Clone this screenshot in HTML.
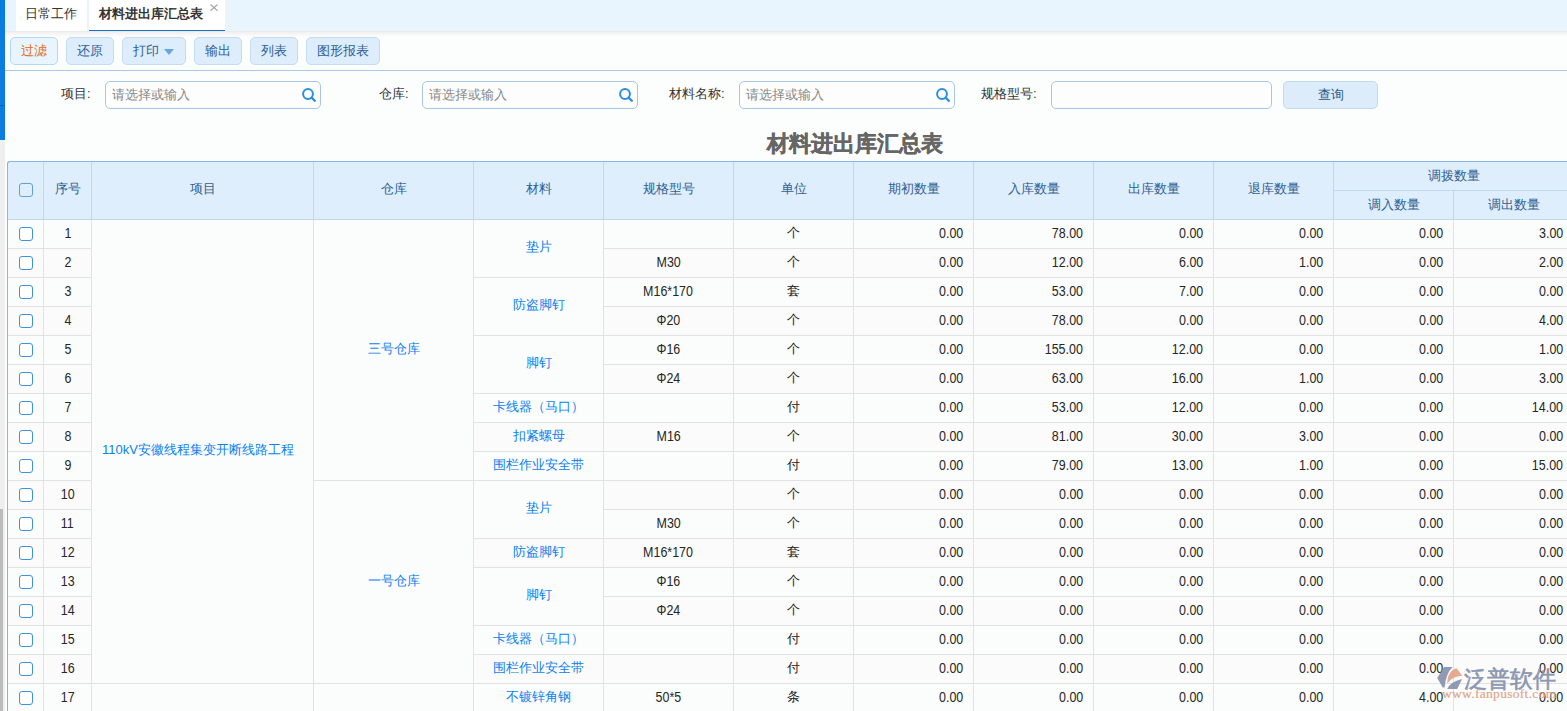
<!DOCTYPE html>
<html><head><meta charset="utf-8">
<style>
*{box-sizing:border-box;margin:0;padding:0}
html,body{width:1567px;height:711px;overflow:hidden;background:#fcfdfd;font-family:"Liberation Sans",sans-serif;font-size:13px;color:#333}
.abs{position:absolute}
#lstrip{position:absolute;left:0;top:140px;width:5px;height:571px;background:#efefef}
#lblue{position:absolute;left:0;top:0;width:5px;height:140px;background:#0a7de0}
#lblue i{position:absolute;left:0;top:105px;width:5px;height:1px;background:#0864b4}
#thumb{position:absolute;left:0;top:509px;width:3px;height:202px;background:#bcbcbc}
#tabbar{position:absolute;left:5px;top:0;width:1562px;height:31px;background:#e8f4fe}
.tab{position:absolute;top:0;height:31px;background:#fff;color:#333;font-size:13px;line-height:28px;white-space:nowrap}
#tb{position:absolute;left:5px;top:31px;width:1562px;height:40px;background:#fcfdfd;border-bottom:1px solid #a9c9e6}
.btn{position:absolute;top:37px;height:28px;border:1px solid #c4dcf1;background:#deedfb;border-radius:5px;color:#2b609a;font-size:13px;text-align:center;line-height:26px}
.lbl{position:absolute;top:85px;line-height:18px;color:#333;font-size:13px;white-space:nowrap}
.inp{position:absolute;top:81px;height:28px;border:1px solid #a8c7e5;border-radius:5px;background:#fdfdfd;color:#888;font-size:13px;line-height:26px;padding-left:6px}
.srch{position:absolute;right:4px;top:6px;width:14px;height:14px}
#title{position:absolute;left:767px;top:130px;font-size:22px;font-weight:bold;color:#666;-webkit-text-stroke:0.4px #666;line-height:28px;white-space:nowrap}
#tbl{position:absolute;left:7px;top:161px;width:1570px;height:560px;border-left:1px solid #84b6e6;border-top:1px solid #84b6e6;border-top-left-radius:4px;overflow:hidden}
.h{position:absolute;background:#dfeefc;border-right:1px solid #c1d8eb;border-bottom:1px solid #c1d8eb;color:#2f6194;font-size:13px;padding-bottom:4px;display:flex;align-items:center;justify-content:center;white-space:nowrap}
.rowbg{position:absolute;left:7px;width:1567px;height:29px}
.c{position:absolute;border-right:1px solid #e2e2e2;border-bottom:1px solid #e2e2e2;font-size:13px;color:#222;display:flex;align-items:center;white-space:nowrap;padding-bottom:2px}
.ctr{justify-content:center}
.dg span{display:inline-block;font-size:14px;transform:scaleX(.89);color:#262626}
.num span{transform-origin:100% 50%}
.cb{justify-content:center}
.num{justify-content:flex-end;padding-right:10px}
.lft{padding-left:10px}
.lnk{color:#0d7ff0}
.mrg{background:#fbfdfd;padding-bottom:3px}
.chk{display:inline-block;width:14px;height:14px;border:1px solid #3d93dd;border-radius:3px;background:#fff}
.cb .chk{margin-top:4px}
.h .chk{background:transparent;border-color:#62a0d6}
#tbody{position:absolute;left:0;top:0}
#logo{position:absolute;left:1437px;top:664px;width:125px;height:40px}
</style></head><body>
<div id="lblue"><i></i></div>
<div id="lstrip"></div>
<div id="thumb"></div>
<div id="tabbar">
 <div class="tab" style="left:11px;width:71px;padding-left:9px">日常工作</div>
 <div class="tab" style="left:84px;width:136px;padding-left:10px;font-weight:bold;border-bottom:1px solid #1570c8">材料进出库汇总表<svg style="position:absolute;left:120px;top:3px" width="10" height="10" viewBox="0 0 10 10"><path d="M1.5,1.5 L8.5,7.8 M8.5,1.5 L1.5,7.8" stroke="#a8a8a8" stroke-width="1.2"/></svg></div>
</div>
<div id="tb"></div>
<div style="position:absolute;left:5px;top:31px;width:1562px;height:1px;background:#ebebe9"></div><div style="position:absolute;left:5px;top:32px;width:1562px;height:1px;background:#f1f1f0"></div><div style="position:absolute;left:5px;top:33px;width:1562px;height:1px;background:#f4f4f4"></div><div style="position:absolute;left:5px;top:34px;width:1562px;height:1px;background:#f7f7f7"></div><div style="position:absolute;left:5px;top:35px;width:1562px;height:1px;background:#f9faf9"></div><div style="position:absolute;left:5px;top:36px;width:1562px;height:1px;background:#fbfcfb"></div>
<div class="btn" style="left:10px;width:48px;color:#e16c14;border-color:#b0d8f8;background:#e8f4fe">过滤</div>
<div class="btn" style="left:66px;width:48px">还原</div>
<div class="btn" style="left:122px;width:64px;text-align:left;padding-left:10px">打印<span style="position:absolute;left:41px;top:11px;width:0;height:0;border-left:5px solid transparent;border-right:5px solid transparent;border-top:6px solid #68a6de"></span></div>
<div class="btn" style="left:194px;width:48px">输出</div>
<div class="btn" style="left:250px;width:48px">列表</div>
<div class="btn" style="left:306px;width:74px">图形报表</div>

<div class="lbl" style="left:61px">项目:</div>
<div class="inp" style="left:105px;width:216px">请选择或输入<svg class="srch" viewBox="0 0 14 14"><circle cx="6" cy="6" r="4.9" fill="none" stroke="#2a8fe0" stroke-width="2"/><path d="M9.6 9.6 L12.8 12.8" stroke="#2a8fe0" stroke-width="2.3" stroke-linecap="round"/></svg></div>
<div class="lbl" style="left:379px">仓库:</div>
<div class="inp" style="left:422px;width:216px">请选择或输入<svg class="srch" viewBox="0 0 14 14"><circle cx="6" cy="6" r="4.9" fill="none" stroke="#2a8fe0" stroke-width="2"/><path d="M9.6 9.6 L12.8 12.8" stroke="#2a8fe0" stroke-width="2.3" stroke-linecap="round"/></svg></div>
<div class="lbl" style="left:669px">材料名称:</div>
<div class="inp" style="left:739px;width:216px">请选择或输入<svg class="srch" viewBox="0 0 14 14"><circle cx="6" cy="6" r="4.9" fill="none" stroke="#2a8fe0" stroke-width="2"/><path d="M9.6 9.6 L12.8 12.8" stroke="#2a8fe0" stroke-width="2.3" stroke-linecap="round"/></svg></div>
<div class="lbl" style="left:981px">规格型号:</div>
<div class="inp" style="left:1051px;width:221px"></div>
<div class="btn" style="left:1283px;top:81px;width:95px;height:28px;color:#2b5a87;background:#dcecfb;border-color:#c2daf0">查询</div>

<div id="title">材料进出库汇总表</div>

<div id="tbl"></div>
<div id="cells" style="position:absolute;left:0;top:0;width:1567px;height:711px;overflow:hidden">
<div class="rowbg" style="top:219px;background:#fbfdfd"></div>
<div class="rowbg" style="top:248px;background:#fcfbfb"></div>
<div class="rowbg" style="top:277px;background:#fbfdfd"></div>
<div class="rowbg" style="top:306px;background:#fcfbfb"></div>
<div class="rowbg" style="top:335px;background:#fbfdfd"></div>
<div class="rowbg" style="top:364px;background:#fcfbfb"></div>
<div class="rowbg" style="top:393px;background:#fbfdfd"></div>
<div class="rowbg" style="top:422px;background:#fcfbfb"></div>
<div class="rowbg" style="top:451px;background:#fbfdfd"></div>
<div class="rowbg" style="top:480px;background:#fcfbfb"></div>
<div class="rowbg" style="top:509px;background:#fbfdfd"></div>
<div class="rowbg" style="top:538px;background:#fcfbfb"></div>
<div class="rowbg" style="top:567px;background:#fbfdfd"></div>
<div class="rowbg" style="top:596px;background:#fcfbfb"></div>
<div class="rowbg" style="top:625px;background:#fbfdfd"></div>
<div class="rowbg" style="top:654px;background:#fcfbfb"></div>
<div class="rowbg" style="top:683px;background:#fbfdfd"></div>
<div class="c cb" style="left:8px;top:220px;width:36px;height:29px;"><span><i class="chk"></i></span></div>
<div class="c ctr dg" style="left:44px;top:220px;width:48px;height:29px;"><span>1</span></div>
<div class="c ctr lnk mrg" style="left:474px;top:220px;width:130px;height:58px;"><span>垫片</span></div>
<div class="c ctr dg" style="left:604px;top:220px;width:130px;height:29px;"><span></span></div>
<div class="c ctr" style="left:734px;top:220px;width:120px;height:29px;"><span>个</span></div>
<div class="c num dg" style="left:854px;top:220px;width:120px;height:29px;"><span>0.00</span></div>
<div class="c num dg" style="left:974px;top:220px;width:120px;height:29px;"><span>78.00</span></div>
<div class="c num dg" style="left:1094px;top:220px;width:120px;height:29px;"><span>0.00</span></div>
<div class="c num dg" style="left:1214px;top:220px;width:120px;height:29px;"><span>0.00</span></div>
<div class="c num dg" style="left:1334px;top:220px;width:120px;height:29px;"><span>0.00</span></div>
<div class="c num dg" style="left:1454px;top:220px;width:120px;height:29px;"><span>3.00</span></div>
<div class="c cb" style="left:8px;top:249px;width:36px;height:29px;"><span><i class="chk"></i></span></div>
<div class="c ctr dg" style="left:44px;top:249px;width:48px;height:29px;"><span>2</span></div>
<div class="c ctr dg" style="left:604px;top:249px;width:130px;height:29px;"><span>M30</span></div>
<div class="c ctr" style="left:734px;top:249px;width:120px;height:29px;"><span>个</span></div>
<div class="c num dg" style="left:854px;top:249px;width:120px;height:29px;"><span>0.00</span></div>
<div class="c num dg" style="left:974px;top:249px;width:120px;height:29px;"><span>12.00</span></div>
<div class="c num dg" style="left:1094px;top:249px;width:120px;height:29px;"><span>6.00</span></div>
<div class="c num dg" style="left:1214px;top:249px;width:120px;height:29px;"><span>1.00</span></div>
<div class="c num dg" style="left:1334px;top:249px;width:120px;height:29px;"><span>0.00</span></div>
<div class="c num dg" style="left:1454px;top:249px;width:120px;height:29px;"><span>2.00</span></div>
<div class="c cb" style="left:8px;top:278px;width:36px;height:29px;"><span><i class="chk"></i></span></div>
<div class="c ctr dg" style="left:44px;top:278px;width:48px;height:29px;"><span>3</span></div>
<div class="c ctr lnk mrg" style="left:474px;top:278px;width:130px;height:58px;"><span>防盗脚钉</span></div>
<div class="c ctr dg" style="left:604px;top:278px;width:130px;height:29px;"><span>M16*170</span></div>
<div class="c ctr" style="left:734px;top:278px;width:120px;height:29px;"><span>套</span></div>
<div class="c num dg" style="left:854px;top:278px;width:120px;height:29px;"><span>0.00</span></div>
<div class="c num dg" style="left:974px;top:278px;width:120px;height:29px;"><span>53.00</span></div>
<div class="c num dg" style="left:1094px;top:278px;width:120px;height:29px;"><span>7.00</span></div>
<div class="c num dg" style="left:1214px;top:278px;width:120px;height:29px;"><span>0.00</span></div>
<div class="c num dg" style="left:1334px;top:278px;width:120px;height:29px;"><span>0.00</span></div>
<div class="c num dg" style="left:1454px;top:278px;width:120px;height:29px;"><span>0.00</span></div>
<div class="c cb" style="left:8px;top:307px;width:36px;height:29px;"><span><i class="chk"></i></span></div>
<div class="c ctr dg" style="left:44px;top:307px;width:48px;height:29px;"><span>4</span></div>
<div class="c ctr dg" style="left:604px;top:307px;width:130px;height:29px;"><span>Φ20</span></div>
<div class="c ctr" style="left:734px;top:307px;width:120px;height:29px;"><span>个</span></div>
<div class="c num dg" style="left:854px;top:307px;width:120px;height:29px;"><span>0.00</span></div>
<div class="c num dg" style="left:974px;top:307px;width:120px;height:29px;"><span>78.00</span></div>
<div class="c num dg" style="left:1094px;top:307px;width:120px;height:29px;"><span>0.00</span></div>
<div class="c num dg" style="left:1214px;top:307px;width:120px;height:29px;"><span>0.00</span></div>
<div class="c num dg" style="left:1334px;top:307px;width:120px;height:29px;"><span>0.00</span></div>
<div class="c num dg" style="left:1454px;top:307px;width:120px;height:29px;"><span>4.00</span></div>
<div class="c cb" style="left:8px;top:336px;width:36px;height:29px;"><span><i class="chk"></i></span></div>
<div class="c ctr dg" style="left:44px;top:336px;width:48px;height:29px;"><span>5</span></div>
<div class="c ctr lnk mrg" style="left:474px;top:336px;width:130px;height:58px;"><span>脚钉</span></div>
<div class="c ctr dg" style="left:604px;top:336px;width:130px;height:29px;"><span>Φ16</span></div>
<div class="c ctr" style="left:734px;top:336px;width:120px;height:29px;"><span>个</span></div>
<div class="c num dg" style="left:854px;top:336px;width:120px;height:29px;"><span>0.00</span></div>
<div class="c num dg" style="left:974px;top:336px;width:120px;height:29px;"><span>155.00</span></div>
<div class="c num dg" style="left:1094px;top:336px;width:120px;height:29px;"><span>12.00</span></div>
<div class="c num dg" style="left:1214px;top:336px;width:120px;height:29px;"><span>0.00</span></div>
<div class="c num dg" style="left:1334px;top:336px;width:120px;height:29px;"><span>0.00</span></div>
<div class="c num dg" style="left:1454px;top:336px;width:120px;height:29px;"><span>1.00</span></div>
<div class="c cb" style="left:8px;top:365px;width:36px;height:29px;"><span><i class="chk"></i></span></div>
<div class="c ctr dg" style="left:44px;top:365px;width:48px;height:29px;"><span>6</span></div>
<div class="c ctr dg" style="left:604px;top:365px;width:130px;height:29px;"><span>Φ24</span></div>
<div class="c ctr" style="left:734px;top:365px;width:120px;height:29px;"><span>个</span></div>
<div class="c num dg" style="left:854px;top:365px;width:120px;height:29px;"><span>0.00</span></div>
<div class="c num dg" style="left:974px;top:365px;width:120px;height:29px;"><span>63.00</span></div>
<div class="c num dg" style="left:1094px;top:365px;width:120px;height:29px;"><span>16.00</span></div>
<div class="c num dg" style="left:1214px;top:365px;width:120px;height:29px;"><span>1.00</span></div>
<div class="c num dg" style="left:1334px;top:365px;width:120px;height:29px;"><span>0.00</span></div>
<div class="c num dg" style="left:1454px;top:365px;width:120px;height:29px;"><span>3.00</span></div>
<div class="c cb" style="left:8px;top:394px;width:36px;height:29px;"><span><i class="chk"></i></span></div>
<div class="c ctr dg" style="left:44px;top:394px;width:48px;height:29px;"><span>7</span></div>
<div class="c ctr lnk" style="left:474px;top:394px;width:130px;height:29px;"><span>卡线器（马口）</span></div>
<div class="c ctr dg" style="left:604px;top:394px;width:130px;height:29px;"><span></span></div>
<div class="c ctr" style="left:734px;top:394px;width:120px;height:29px;"><span>付</span></div>
<div class="c num dg" style="left:854px;top:394px;width:120px;height:29px;"><span>0.00</span></div>
<div class="c num dg" style="left:974px;top:394px;width:120px;height:29px;"><span>53.00</span></div>
<div class="c num dg" style="left:1094px;top:394px;width:120px;height:29px;"><span>12.00</span></div>
<div class="c num dg" style="left:1214px;top:394px;width:120px;height:29px;"><span>0.00</span></div>
<div class="c num dg" style="left:1334px;top:394px;width:120px;height:29px;"><span>0.00</span></div>
<div class="c num dg" style="left:1454px;top:394px;width:120px;height:29px;"><span>14.00</span></div>
<div class="c cb" style="left:8px;top:423px;width:36px;height:29px;"><span><i class="chk"></i></span></div>
<div class="c ctr dg" style="left:44px;top:423px;width:48px;height:29px;"><span>8</span></div>
<div class="c ctr lnk" style="left:474px;top:423px;width:130px;height:29px;"><span>扣紧螺母</span></div>
<div class="c ctr dg" style="left:604px;top:423px;width:130px;height:29px;"><span>M16</span></div>
<div class="c ctr" style="left:734px;top:423px;width:120px;height:29px;"><span>个</span></div>
<div class="c num dg" style="left:854px;top:423px;width:120px;height:29px;"><span>0.00</span></div>
<div class="c num dg" style="left:974px;top:423px;width:120px;height:29px;"><span>81.00</span></div>
<div class="c num dg" style="left:1094px;top:423px;width:120px;height:29px;"><span>30.00</span></div>
<div class="c num dg" style="left:1214px;top:423px;width:120px;height:29px;"><span>3.00</span></div>
<div class="c num dg" style="left:1334px;top:423px;width:120px;height:29px;"><span>0.00</span></div>
<div class="c num dg" style="left:1454px;top:423px;width:120px;height:29px;"><span>0.00</span></div>
<div class="c cb" style="left:8px;top:452px;width:36px;height:29px;"><span><i class="chk"></i></span></div>
<div class="c ctr dg" style="left:44px;top:452px;width:48px;height:29px;"><span>9</span></div>
<div class="c ctr lnk" style="left:474px;top:452px;width:130px;height:29px;"><span>围栏作业安全带</span></div>
<div class="c ctr dg" style="left:604px;top:452px;width:130px;height:29px;"><span></span></div>
<div class="c ctr" style="left:734px;top:452px;width:120px;height:29px;"><span>付</span></div>
<div class="c num dg" style="left:854px;top:452px;width:120px;height:29px;"><span>0.00</span></div>
<div class="c num dg" style="left:974px;top:452px;width:120px;height:29px;"><span>79.00</span></div>
<div class="c num dg" style="left:1094px;top:452px;width:120px;height:29px;"><span>13.00</span></div>
<div class="c num dg" style="left:1214px;top:452px;width:120px;height:29px;"><span>1.00</span></div>
<div class="c num dg" style="left:1334px;top:452px;width:120px;height:29px;"><span>0.00</span></div>
<div class="c num dg" style="left:1454px;top:452px;width:120px;height:29px;"><span>15.00</span></div>
<div class="c cb" style="left:8px;top:481px;width:36px;height:29px;"><span><i class="chk"></i></span></div>
<div class="c ctr dg" style="left:44px;top:481px;width:48px;height:29px;"><span>10</span></div>
<div class="c ctr lnk mrg" style="left:474px;top:481px;width:130px;height:58px;"><span>垫片</span></div>
<div class="c ctr dg" style="left:604px;top:481px;width:130px;height:29px;"><span></span></div>
<div class="c ctr" style="left:734px;top:481px;width:120px;height:29px;"><span>个</span></div>
<div class="c num dg" style="left:854px;top:481px;width:120px;height:29px;"><span>0.00</span></div>
<div class="c num dg" style="left:974px;top:481px;width:120px;height:29px;"><span>0.00</span></div>
<div class="c num dg" style="left:1094px;top:481px;width:120px;height:29px;"><span>0.00</span></div>
<div class="c num dg" style="left:1214px;top:481px;width:120px;height:29px;"><span>0.00</span></div>
<div class="c num dg" style="left:1334px;top:481px;width:120px;height:29px;"><span>0.00</span></div>
<div class="c num dg" style="left:1454px;top:481px;width:120px;height:29px;"><span>0.00</span></div>
<div class="c cb" style="left:8px;top:510px;width:36px;height:29px;"><span><i class="chk"></i></span></div>
<div class="c ctr dg" style="left:44px;top:510px;width:48px;height:29px;"><span>11</span></div>
<div class="c ctr dg" style="left:604px;top:510px;width:130px;height:29px;"><span>M30</span></div>
<div class="c ctr" style="left:734px;top:510px;width:120px;height:29px;"><span>个</span></div>
<div class="c num dg" style="left:854px;top:510px;width:120px;height:29px;"><span>0.00</span></div>
<div class="c num dg" style="left:974px;top:510px;width:120px;height:29px;"><span>0.00</span></div>
<div class="c num dg" style="left:1094px;top:510px;width:120px;height:29px;"><span>0.00</span></div>
<div class="c num dg" style="left:1214px;top:510px;width:120px;height:29px;"><span>0.00</span></div>
<div class="c num dg" style="left:1334px;top:510px;width:120px;height:29px;"><span>0.00</span></div>
<div class="c num dg" style="left:1454px;top:510px;width:120px;height:29px;"><span>0.00</span></div>
<div class="c cb" style="left:8px;top:539px;width:36px;height:29px;"><span><i class="chk"></i></span></div>
<div class="c ctr dg" style="left:44px;top:539px;width:48px;height:29px;"><span>12</span></div>
<div class="c ctr lnk" style="left:474px;top:539px;width:130px;height:29px;"><span>防盗脚钉</span></div>
<div class="c ctr dg" style="left:604px;top:539px;width:130px;height:29px;"><span>M16*170</span></div>
<div class="c ctr" style="left:734px;top:539px;width:120px;height:29px;"><span>套</span></div>
<div class="c num dg" style="left:854px;top:539px;width:120px;height:29px;"><span>0.00</span></div>
<div class="c num dg" style="left:974px;top:539px;width:120px;height:29px;"><span>0.00</span></div>
<div class="c num dg" style="left:1094px;top:539px;width:120px;height:29px;"><span>0.00</span></div>
<div class="c num dg" style="left:1214px;top:539px;width:120px;height:29px;"><span>0.00</span></div>
<div class="c num dg" style="left:1334px;top:539px;width:120px;height:29px;"><span>0.00</span></div>
<div class="c num dg" style="left:1454px;top:539px;width:120px;height:29px;"><span>0.00</span></div>
<div class="c cb" style="left:8px;top:568px;width:36px;height:29px;"><span><i class="chk"></i></span></div>
<div class="c ctr dg" style="left:44px;top:568px;width:48px;height:29px;"><span>13</span></div>
<div class="c ctr lnk mrg" style="left:474px;top:568px;width:130px;height:58px;"><span>脚钉</span></div>
<div class="c ctr dg" style="left:604px;top:568px;width:130px;height:29px;"><span>Φ16</span></div>
<div class="c ctr" style="left:734px;top:568px;width:120px;height:29px;"><span>个</span></div>
<div class="c num dg" style="left:854px;top:568px;width:120px;height:29px;"><span>0.00</span></div>
<div class="c num dg" style="left:974px;top:568px;width:120px;height:29px;"><span>0.00</span></div>
<div class="c num dg" style="left:1094px;top:568px;width:120px;height:29px;"><span>0.00</span></div>
<div class="c num dg" style="left:1214px;top:568px;width:120px;height:29px;"><span>0.00</span></div>
<div class="c num dg" style="left:1334px;top:568px;width:120px;height:29px;"><span>0.00</span></div>
<div class="c num dg" style="left:1454px;top:568px;width:120px;height:29px;"><span>0.00</span></div>
<div class="c cb" style="left:8px;top:597px;width:36px;height:29px;"><span><i class="chk"></i></span></div>
<div class="c ctr dg" style="left:44px;top:597px;width:48px;height:29px;"><span>14</span></div>
<div class="c ctr dg" style="left:604px;top:597px;width:130px;height:29px;"><span>Φ24</span></div>
<div class="c ctr" style="left:734px;top:597px;width:120px;height:29px;"><span>个</span></div>
<div class="c num dg" style="left:854px;top:597px;width:120px;height:29px;"><span>0.00</span></div>
<div class="c num dg" style="left:974px;top:597px;width:120px;height:29px;"><span>0.00</span></div>
<div class="c num dg" style="left:1094px;top:597px;width:120px;height:29px;"><span>0.00</span></div>
<div class="c num dg" style="left:1214px;top:597px;width:120px;height:29px;"><span>0.00</span></div>
<div class="c num dg" style="left:1334px;top:597px;width:120px;height:29px;"><span>0.00</span></div>
<div class="c num dg" style="left:1454px;top:597px;width:120px;height:29px;"><span>0.00</span></div>
<div class="c cb" style="left:8px;top:626px;width:36px;height:29px;"><span><i class="chk"></i></span></div>
<div class="c ctr dg" style="left:44px;top:626px;width:48px;height:29px;"><span>15</span></div>
<div class="c ctr lnk" style="left:474px;top:626px;width:130px;height:29px;"><span>卡线器（马口）</span></div>
<div class="c ctr dg" style="left:604px;top:626px;width:130px;height:29px;"><span></span></div>
<div class="c ctr" style="left:734px;top:626px;width:120px;height:29px;"><span>付</span></div>
<div class="c num dg" style="left:854px;top:626px;width:120px;height:29px;"><span>0.00</span></div>
<div class="c num dg" style="left:974px;top:626px;width:120px;height:29px;"><span>0.00</span></div>
<div class="c num dg" style="left:1094px;top:626px;width:120px;height:29px;"><span>0.00</span></div>
<div class="c num dg" style="left:1214px;top:626px;width:120px;height:29px;"><span>0.00</span></div>
<div class="c num dg" style="left:1334px;top:626px;width:120px;height:29px;"><span>0.00</span></div>
<div class="c num dg" style="left:1454px;top:626px;width:120px;height:29px;"><span>0.00</span></div>
<div class="c cb" style="left:8px;top:655px;width:36px;height:29px;"><span><i class="chk"></i></span></div>
<div class="c ctr dg" style="left:44px;top:655px;width:48px;height:29px;"><span>16</span></div>
<div class="c ctr lnk" style="left:474px;top:655px;width:130px;height:29px;"><span>围栏作业安全带</span></div>
<div class="c ctr dg" style="left:604px;top:655px;width:130px;height:29px;"><span></span></div>
<div class="c ctr" style="left:734px;top:655px;width:120px;height:29px;"><span>付</span></div>
<div class="c num dg" style="left:854px;top:655px;width:120px;height:29px;"><span>0.00</span></div>
<div class="c num dg" style="left:974px;top:655px;width:120px;height:29px;"><span>0.00</span></div>
<div class="c num dg" style="left:1094px;top:655px;width:120px;height:29px;"><span>0.00</span></div>
<div class="c num dg" style="left:1214px;top:655px;width:120px;height:29px;"><span>0.00</span></div>
<div class="c num dg" style="left:1334px;top:655px;width:120px;height:29px;"><span>0.00</span></div>
<div class="c num dg" style="left:1454px;top:655px;width:120px;height:29px;"><span>0.00</span></div>
<div class="c cb" style="left:8px;top:684px;width:36px;height:29px;"><span><i class="chk"></i></span></div>
<div class="c ctr dg" style="left:44px;top:684px;width:48px;height:29px;"><span>17</span></div>
<div class="c ctr lnk" style="left:474px;top:684px;width:130px;height:29px;"><span>不镀锌角钢</span></div>
<div class="c ctr dg" style="left:604px;top:684px;width:130px;height:29px;"><span>50*5</span></div>
<div class="c ctr" style="left:734px;top:684px;width:120px;height:29px;"><span>条</span></div>
<div class="c num dg" style="left:854px;top:684px;width:120px;height:29px;"><span>0.00</span></div>
<div class="c num dg" style="left:974px;top:684px;width:120px;height:29px;"><span>0.00</span></div>
<div class="c num dg" style="left:1094px;top:684px;width:120px;height:29px;"><span>0.00</span></div>
<div class="c num dg" style="left:1214px;top:684px;width:120px;height:29px;"><span>0.00</span></div>
<div class="c num dg" style="left:1334px;top:684px;width:120px;height:29px;"><span>4.00</span></div>
<div class="c num dg" style="left:1454px;top:684px;width:120px;height:29px;"><span>0.00</span></div>
<div class="c lft lnk mrg" style="left:92px;top:220px;width:222px;height:464px;"><span>110kV安徽线程集变开断线路工程</span></div>
<div class="c ctr lnk mrg" style="left:314px;top:220px;width:160px;height:261px;"><span>三号仓库</span></div>
<div class="c ctr lnk mrg" style="left:314px;top:481px;width:160px;height:203px;"><span>一号仓库</span></div>
<div class="c lft lnk" style="left:92px;top:684px;width:222px;height:29px;"><span></span></div>
<div class="c ctr lnk" style="left:314px;top:684px;width:160px;height:29px;"><span></span></div>
<div class="h" style="left:8px;top:162px;width:36px;height:58px;padding-bottom:2px"><i class="chk"></i></div>
<div class="h" style="left:44px;top:162px;width:48px;height:58px;"><span>序号</span></div>
<div class="h" style="left:92px;top:162px;width:222px;height:58px;"><span>项目</span></div>
<div class="h" style="left:314px;top:162px;width:160px;height:58px;"><span>仓库</span></div>
<div class="h" style="left:474px;top:162px;width:130px;height:58px;"><span>材料</span></div>
<div class="h" style="left:604px;top:162px;width:130px;height:58px;"><span>规格型号</span></div>
<div class="h" style="left:734px;top:162px;width:120px;height:58px;"><span>单位</span></div>
<div class="h" style="left:854px;top:162px;width:120px;height:58px;"><span>期初数量</span></div>
<div class="h" style="left:974px;top:162px;width:120px;height:58px;"><span>入库数量</span></div>
<div class="h" style="left:1094px;top:162px;width:120px;height:58px;"><span>出库数量</span></div>
<div class="h" style="left:1214px;top:162px;width:120px;height:58px;"><span>退库数量</span></div>
<div class="h" style="left:1334px;top:162px;width:240px;height:29px;padding-bottom:1px;"><span>调拨数量</span></div>
<div class="h" style="left:1334px;top:191px;width:120px;height:29px;padding-bottom:1px;"><span>调入数量</span></div>
<div class="h" style="left:1454px;top:191px;width:120px;height:29px;padding-bottom:1px;"><span>调出数量</span></div>
</div>
<div style="position:absolute;left:7px;top:161px;width:1570px;height:560px;border-left:1px solid #84b6e6;border-top:1px solid #84b6e6;border-top-left-radius:3px"></div>
<svg style="position:absolute;left:1432px;top:660px;opacity:.92" width="135" height="51" viewBox="0 0 135 51">
<path d="M12,7 L20.7,7 Q14,13 12.6,27.5 L10.8,27.5 L5.2,18 Z" fill="#8793ad"/>
<path d="M15.3,23.5 C15.3,15 19,9.5 24.6,8.2 L30.3,15.8 Q20,16.5 15.3,23.5 Z" fill="#e2a58a"/>
<path d="M15.2,29.1 Q18,22 30.1,19.1 L25.2,29.1 Z" fill="#8793ad"/>
</svg>
<div id="lgt" style="position:absolute;left:1464px;top:665px;font-size:22.8px;line-height:28px;color:#8793ad;white-space:nowrap;-webkit-text-stroke:0.6px #8793ad;opacity:.95">泛普软件</div>
<div id="lgu" style="position:absolute;left:1442px;top:686px;font-family:'Liberation Serif',serif;font-size:13.5px;line-height:16px;color:#e2a58a;white-space:nowrap;-webkit-text-stroke:0.2px #e2a58a;letter-spacing:0.3px">www.fanpusoft.com</div>
</body></html>
